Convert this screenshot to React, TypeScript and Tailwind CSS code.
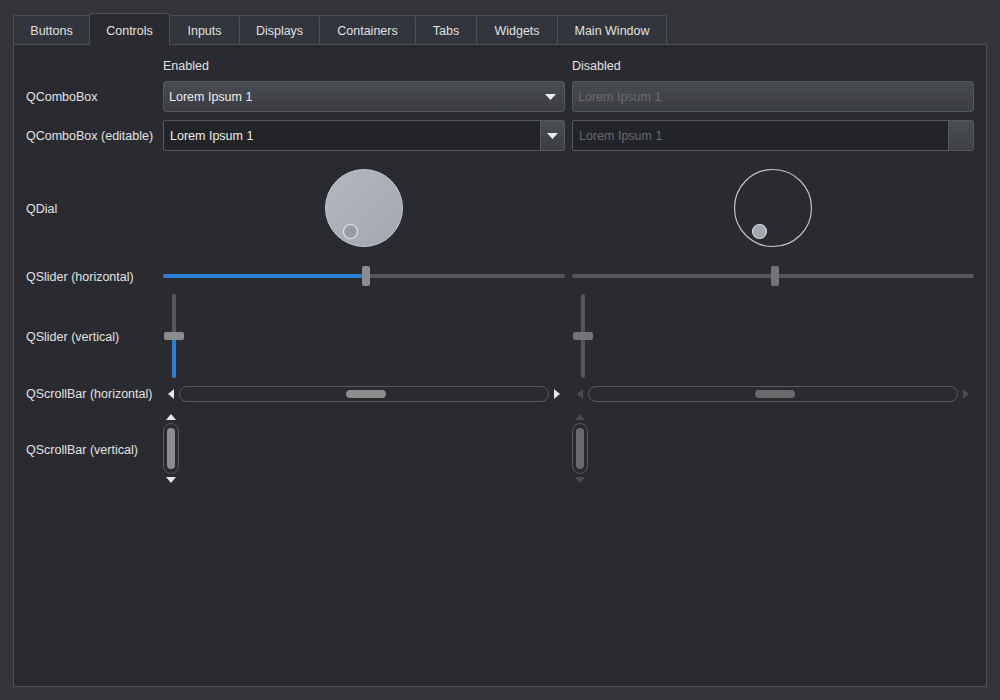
import React from "react";

const FONT = { fontFamily: '"Liberation Sans", Arial, sans-serif' };

const tabs = [
  { name: "Buttons", w: 77 },
  { name: "Controls", w: 81 },
  { name: "Inputs", w: 71 },
  { name: "Displays", w: 81 },
  { name: "Containers", w: 97 },
  { name: "Tabs", w: 62 },
  { name: "Widgets", w: 82 },
  { name: "Main Window", w: 110 },
];

function Arrow({ dir, color, w = 10, h = 6 }: { dir: "down" | "up" | "left" | "right"; color: string; w?: number; h?: number }) {
  let pts = "";
  if (dir === "down") pts = `0,0 ${w},0 ${w / 2},${h}`;
  if (dir === "up") pts = `0,${h} ${w},${h} ${w / 2},0`;
  if (dir === "left") pts = `${w},0 ${w},${h} 0,${h / 2}`;
  if (dir === "right") pts = `0,0 0,${h} ${w},${h / 2}`;
  return (
    <svg width={w} height={h} viewBox={`0 0 ${w} ${h}`} className="block">
      <polygon points={pts} fill={color} />
    </svg>
  );
}

function Row({ label, h, mt, flat, children }: { label: string; h: number; mt: number; flat?: boolean; children: React.ReactNode }) {
  return (
    <div className="grid grid-cols-[130px_402px_402px] gap-x-[7px]" style={{ height: h, marginTop: mt }}>
      <div className={`flex items-center text-[12.5px] text-[#e2e2e2] ${flat ? "pt-0" : "pt-[2px]"}`}>{label}</div>
      {children}
    </div>
  );
}

function Dial({ enabled }: { enabled: boolean }) {
  return (
    <div className="flex items-center justify-center h-full">
      <svg width="80" height="80" viewBox="0 0 80 80">
        <defs>
          <linearGradient id="dialg" x1="0" y1="0" x2="1" y2="1">
            <stop offset="0" stopColor="#b3b8c0" />
            <stop offset="1" stopColor="#a2a7b0" />
          </linearGradient>
        </defs>
        {enabled ? (
          <circle cx="40" cy="40" r="38.5" fill="url(#dialg)" stroke="#c4c8ce" strokeWidth="1" />
        ) : (
          <circle cx="40" cy="40" r="38.5" fill="none" stroke="#c2c4c8" strokeWidth="1.2" />
        )}
        <circle cx="26.5" cy="63.5" r="7" fill={enabled ? "#979ca4" : "#a0a7af"} stroke={enabled ? "#e2e4e8" : "#d0d4d8"} strokeWidth="1.2" />
      </svg>
    </div>
  );
}

function HSlider({ enabled }: { enabled: boolean }) {
  return (
    <div className="relative h-full">
      <div className="absolute left-0 right-0 top-[8px] h-[4px] rounded-full bg-[#55575c]" />
      {enabled && <div className="absolute left-0 w-[200px] top-[8px] h-[4px] rounded-full bg-[#2a7ed3]" />}
      <div className={`absolute left-[199px] top-0 w-[8px] h-[20px] rounded-[2px] ${enabled ? "bg-[#8c8c8c]" : "bg-[#747474]"}`} />
    </div>
  );
}

function VSlider({ enabled }: { enabled: boolean }) {
  return (
    <div className="relative h-full">
      <div className="absolute left-[9px] w-[4px] top-[2px] bottom-[2px] rounded-full bg-[#55575c]" />
      {enabled && <div className="absolute left-[9px] w-[4px] top-[46px] bottom-[2px] rounded-full bg-[#2a7ed3]" />}
      <div className={`absolute left-[1px] top-[40px] w-[20px] h-[8px] rounded-[2px] ${enabled ? "bg-[#8c8c8c]" : "bg-[#747474]"}`} />
    </div>
  );
}

function HScroll({ enabled }: { enabled: boolean }) {
  const ac = enabled ? "#e6e6e6" : "#4a4c51";
  return (
    <div className="flex items-center h-full">
      <div className="w-[16px] flex justify-center"><Arrow dir="left" color={ac} w={6} h={10} /></div>
      <div className="relative w-[370px] h-[16px] rounded-full border border-[#55585e]">
        <div className={`absolute left-[166px] top-[3px] w-[40px] h-[8px] rounded-full ${enabled ? "bg-[#8d8d8d]" : "bg-[#6a6a6a]"}`} />
      </div>
      <div className="w-[16px] flex justify-center"><Arrow dir="right" color={ac} w={6} h={10} /></div>
    </div>
  );
}

function VScroll({ enabled }: { enabled: boolean }) {
  const ac = enabled ? "#e6e6e6" : "#4a4c51";
  return (
    <div className="flex flex-col items-start h-full">
      <div className="w-[16px] h-[12px] flex items-center justify-center"><Arrow dir="up" color={ac} w={10} h={6} /></div>
      <div className="relative w-[16px] h-[51px] rounded-full border border-[#55585e]">
        <div className={`absolute left-[3px] top-[4px] w-[8px] h-[41px] rounded-full ${enabled ? "bg-[#8d8d8d]" : "bg-[#6a6a6a]"}`} />
      </div>
      <div className="w-[16px] h-[12px] flex items-center justify-center"><Arrow dir="down" color={ac} w={10} h={6} /></div>
    </div>
  );
}

export default function App() {
  return (
    <div style={FONT} className="w-[1000px] h-[700px] bg-[#33353a] pt-[13px] px-[13px] pb-[13px] flex flex-col text-[12.5px] text-[#e2e2e2]">
      <div className="flex items-end h-[31px]">
        {tabs.map((t, i) => {
          const sel = t.name === "Controls";
          return (
            <div
              key={t.name}
              style={{ width: t.w, marginLeft: i === 0 ? 0 : -1 }}
              className={
                sel
                  ? "relative z-10 h-[32px] -mb-px flex items-center justify-center bg-[#2a2b30] border border-b-0 border-[#4c4f56] rounded-t-[3px] pt-[4px]"
                  : "h-[29px] flex items-center justify-center pt-[2px] bg-[#32353b] border border-b-0 border-[#4c4f56] rounded-t-[2px] text-[#e0e0e0]"
              }
            >
              {t.name}
            </div>
          );
        })}
      </div>
      <div className="flex-1 bg-[#2a2b30] border border-[#4c4f56] pl-[12px] pt-[11px]">
        <div className="grid grid-cols-[130px_402px_402px] gap-x-[7px] h-[19px]">
          <div />
          <div className="flex items-center pt-[1px]">Enabled</div>
          <div className="flex items-center pt-[1px]">Disabled</div>
        </div>
        <Row label="QComboBox" h={31} mt={6}>
          <div className="flex items-center justify-between rounded-[3px] border border-[#55585e] bg-gradient-to-b from-[#4a4d53] to-[#393b40] pl-[5px] pr-[8px] text-[#ececec]">
            <span className="pt-[2px]">Lorem Ipsum 1</span>
            <Arrow dir="down" color="#ececec" w={11} h={6} />
          </div>
          <div className="flex items-center rounded-[3px] border border-[#55585e] bg-gradient-to-b from-[#484b51] to-[#3c3e43] pl-[5px] text-[#676a6f]">
            <span className="pt-[2px]">Lorem Ipsum 1</span>
          </div>
        </Row>
        <Row label="QComboBox (editable)" h={31} mt={8}>
          <div className="flex rounded-[2px] border border-[#55585e] bg-[#232428] overflow-hidden text-[#ececec]">
            <div className="flex-1 flex items-center pl-[6px] pt-[2px]">Lorem Ipsum 1</div>
            <div className="w-[24px] flex items-center justify-center border-l border-[#55585e] bg-gradient-to-b from-[#4c4f55] to-[#3b3d42]">
              <Arrow dir="down" color="#ececec" w={11} h={6} />
            </div>
          </div>
          <div className="flex rounded-[2px] border border-[#55585e] bg-[#232428] overflow-hidden text-[#676a6f]">
            <div className="flex-1 flex items-center pl-[6px] pt-[2px]">Lorem Ipsum 1</div>
            <div className="w-[25px] border-l border-[#55585e] bg-gradient-to-b from-[#4a4d52] to-[#3e4045]" />
          </div>
        </Row>
        <Row label="QDial" h={96} mt={9}>
          <Dial enabled />
          <Dial enabled={false} />
        </Row>
        <Row label="QSlider (horizontal)" h={20} mt={10}>
          <HSlider enabled />
          <HSlider enabled={false} />
        </Row>
        <Row label="QSlider (vertical)" h={88} mt={6}>
          <VSlider enabled />
          <VSlider enabled={false} />
        </Row>
        <Row label="QScrollBar (horizontal)" h={16} mt={5} flat>
          <HScroll enabled />
          <HScroll enabled={false} />
        </Row>
        <Row label="QScrollBar (vertical)" h={76} mt={10}>
          <VScroll enabled />
          <VScroll enabled={false} />
        </Row>
      </div>
    </div>
  );
}
